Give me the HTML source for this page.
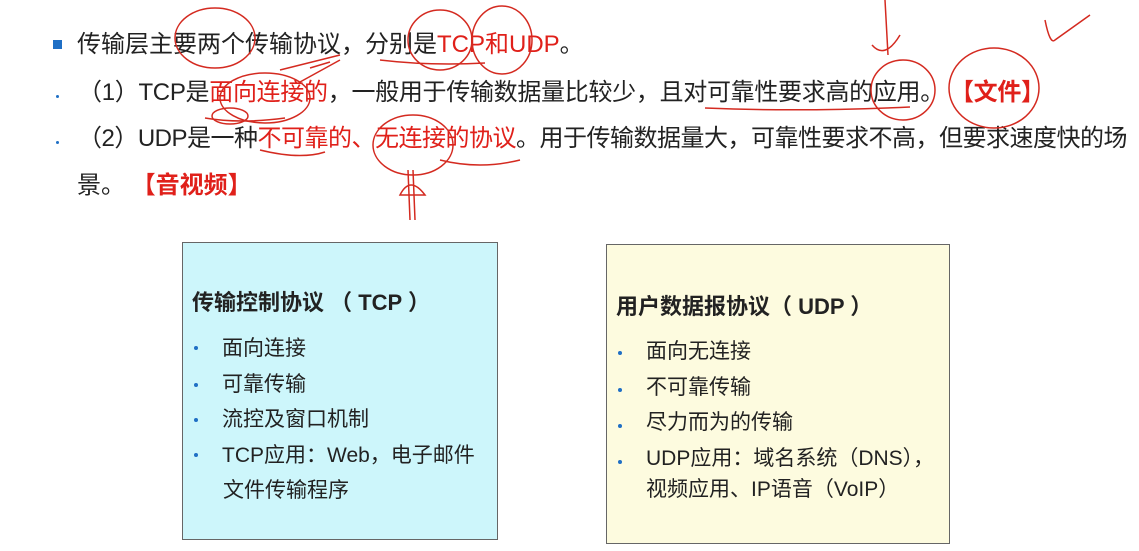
<!DOCTYPE html>
<html><head><meta charset="utf-8"><style>
body{margin:0;width:1139px;height:551px;background:#fff;position:relative;overflow:hidden;font-family:"Liberation Sans","Noto Sans CJK SC",sans-serif;color:#222}
.l{position:absolute;white-space:nowrap;font-size:24px;letter-spacing:0px;line-height:30px}
.r{color:#e0201a}
.b{font-weight:bold}
.box{position:absolute;border:1.5px solid #666;box-sizing:border-box}
.t{position:absolute;white-space:nowrap;font-size:21px;line-height:24px}
.dot{position:absolute;width:4px;height:4px;border-radius:50%;background:#1f6fc5}
</style></head><body>
<div style="position:absolute;left:53px;top:40px;width:9px;height:9px;background:#1f6fc5"></div>
<div class="l" style="left:77px;top:30px">传输层主要两个传输协议，分别是<span class="r">TCP和UDP</span>。</div>
<div class="dot" style="left:56px;top:95px;width:3px;height:3px"></div>
<div class="l" style="left:78px;top:78px;letter-spacing:-0.3px">（1）TCP是<span class="r">面向连接的</span>，一般用于传输数据量比较少，且对可靠性要求高的应用。<span class="r b" style="margin-left:18px">【文件】</span></div>
<div class="dot" style="left:56px;top:141px;width:3px;height:3px"></div>
<div class="l" style="left:78px;top:124px;letter-spacing:-0.5px">（2）UDP是一种<span class="r">不可靠的、无连接的协议</span>。用于传输数据量大，可靠性要求不高，但要求速度快的场</div>
<div class="l" style="left:77px;top:171px">景。 <span class="r b">【音视频】</span></div>

<div class="box" style="left:182px;top:242px;width:316px;height:298px;background:#cdf6fb"></div>
<div class="t b" style="left:192px;top:291px;font-size:22px">传输控制协议 （ TCP ）</div>
<div class="dot" style="left:194px;top:346px"></div><div class="t" style="left:222px;top:337px">面向连接</div>
<div class="dot" style="left:194px;top:383px"></div><div class="t" style="left:222px;top:373px">可靠传输</div>
<div class="dot" style="left:194px;top:418px"></div><div class="t" style="left:222px;top:408px">流控及窗口机制</div>
<div class="dot" style="left:194px;top:453px"></div><div class="t" style="left:222px;top:444px">TCP应用：Web，电子邮件</div>
<div class="t" style="left:223px;top:479px">文件传输程序</div>

<div class="box" style="left:606px;top:244px;width:344px;height:300px;background:#fdfbdf"></div>
<div class="t b" style="left:616px;top:295px;font-size:22px">用户数据报协议（ UDP ）</div>
<div class="dot" style="left:618px;top:351px"></div><div class="t" style="left:646px;top:340px">面向无连接</div>
<div class="dot" style="left:618px;top:388px"></div><div class="t" style="left:646px;top:376px">不可靠传输</div>
<div class="dot" style="left:618px;top:424px"></div><div class="t" style="left:646px;top:411px">尽力而为的传输</div>
<div class="dot" style="left:618px;top:460px"></div><div class="t" style="left:646px;top:447px">UDP应用：域名系统（DNS），</div>
<div class="t" style="left:646px;top:478px">视频应用、IP语音（VoIP）</div>

<svg style="position:absolute;left:0;top:0" width="1139" height="551" fill="none" stroke="#d42a20" stroke-width="1.5">
<ellipse cx="215" cy="38" rx="40" ry="30"/>
<ellipse cx="440" cy="40" rx="32" ry="30"/>
<ellipse cx="502" cy="40" rx="30" ry="34"/>
<path d="M380 60 Q430 66 485 63"/>
<path d="M310 68 L330 62 M280 70 L340 55 M300 82 L340 60"/>
<ellipse cx="265" cy="98" rx="45" ry="25"/>
<ellipse cx="230" cy="116" rx="18" ry="8"/>
<path d="M205 118 Q240 124 285 118"/>
<path d="M705 108 Q800 112 910 107"/>
<ellipse cx="903" cy="90" rx="32" ry="30"/>
<path d="M885 0 L888 55 M872 45 Q885 60 900 35"/>
<ellipse cx="994" cy="88" rx="45" ry="40"/>
<path d="M1045 20 Q1050 45 1055 40 L1090 15"/>
<path d="M260 150 Q300 160 325 152"/>
<ellipse cx="413" cy="145" rx="40" ry="30"/>
<path d="M440 160 Q480 170 520 160"/>
<path d="M408 170 L410 220 M413 170 L415 220 M400 195 Q410 175 425 195 Z"/>
</svg>
</body></html>
